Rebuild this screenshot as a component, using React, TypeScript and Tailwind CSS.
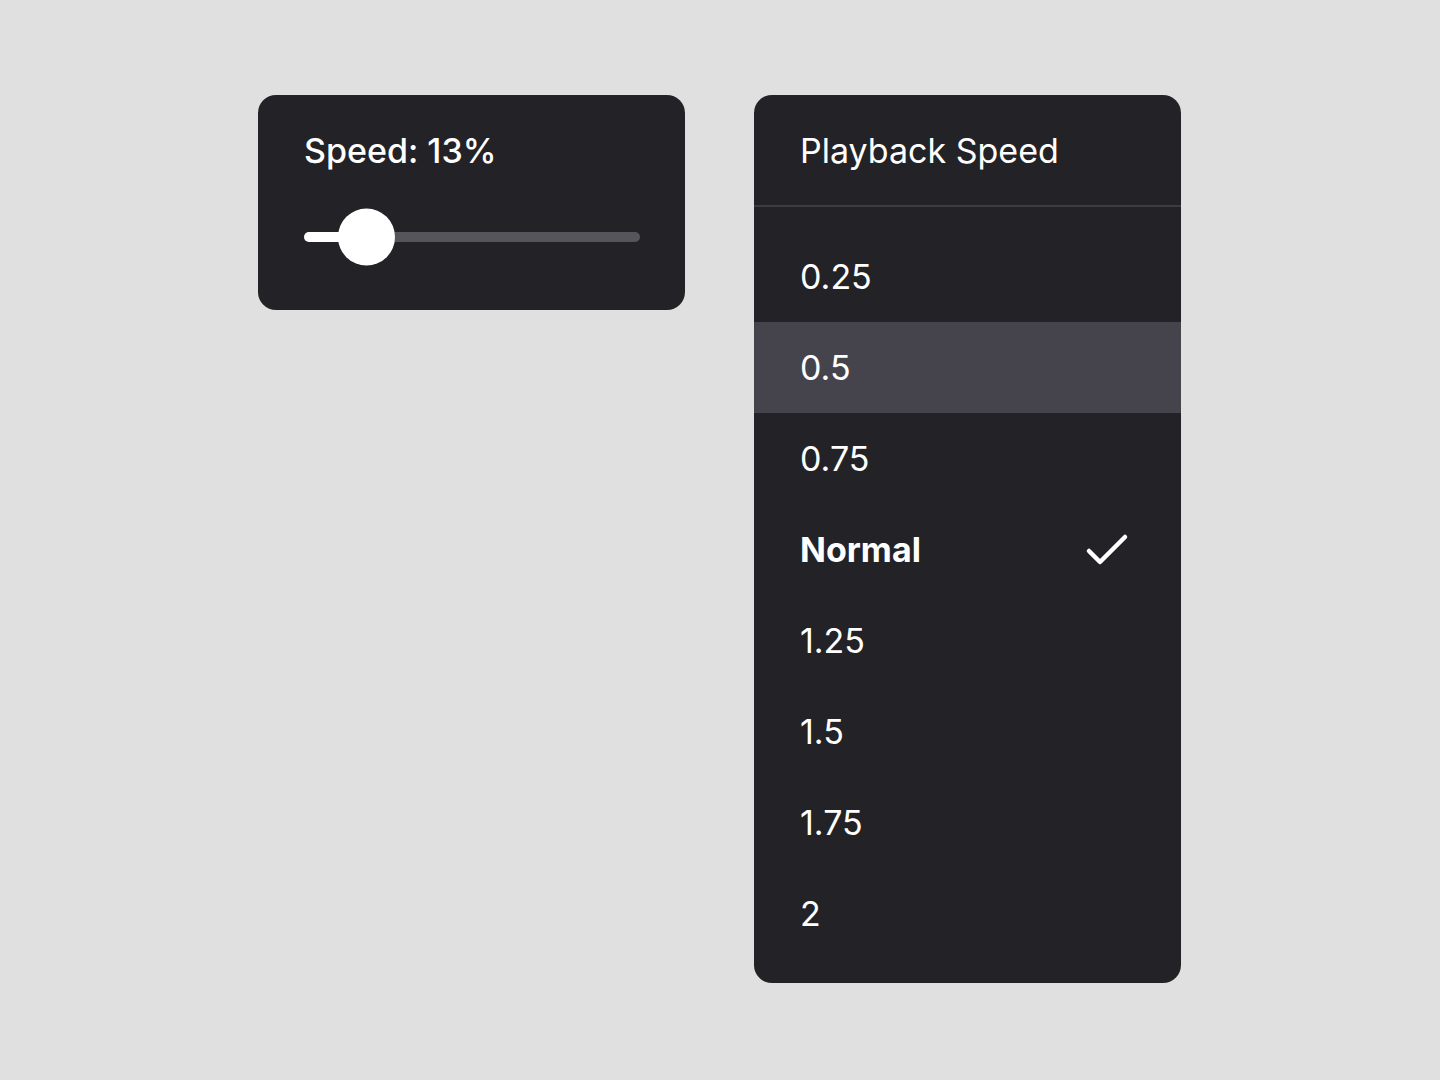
import React from "react";

const speeds = ["0.25", "0.5", "0.75", "Normal", "1.25", "1.5", "1.75", "2"];

export default function App() {
  const selected = "Normal";
  const hovered = "0.5";
  return (
    <div
      className="min-h-screen w-full bg-[#e0e0e0] flex justify-start items-start gap-[69px] pt-[95px] pl-[258px]"
      style={{ fontFamily: "Inter, 'Noto Sans', sans-serif" }}
    >
      <div className="w-[427px] h-[215px] rounded-[18px] bg-[#232227] pl-[46px] pr-[45px] pt-[36px] flex flex-col">
        <div className="text-[34px] leading-[40px] font-medium text-white">Speed: 13%</div>
        <div className="relative h-[58px] mt-[37px] flex items-center">
          <div className="w-full h-[10px] rounded-full bg-[#56555c]" />
          <div className="absolute left-0 top-1/2 -translate-y-1/2 h-[10px] w-[63px] rounded-full bg-white" />
          <div className="absolute left-[34px] top-1/2 -translate-y-1/2 w-[57px] h-[57px] rounded-full bg-white" />
        </div>
      </div>

      <div className="w-[427px] rounded-[18px] bg-[#232227] flex flex-col">
        <div className="h-[110px] px-[46px] pt-[1px] flex items-center text-[34px] text-white">Playback Speed</div>
        <div className="h-[2px] bg-[#3d3c42]" />
        <div className="pt-[24px] pb-[24px] flex flex-col">
          {speeds.map((s) => (
            <div
              key={s}
              className={`h-[91px] px-[46px] flex items-center justify-between text-[34px] text-white ${
                s === hovered ? "bg-[#45434c]" : ""
              } ${s === selected ? "font-bold" : "font-normal"}`}
            >
              <span>{s}</span>
              {s === selected && (
                <svg width="44" height="34" viewBox="0 0 44 34" className="mr-[6px]" fill="none">
                  <polyline
                    points="4,18 15,29 40,4"
                    stroke="white"
                    strokeWidth="4.5"
                    strokeLinecap="round"
                    strokeLinejoin="round"
                  />
                </svg>
              )}
            </div>
          ))}
        </div>
      </div>
    </div>
  );
}
